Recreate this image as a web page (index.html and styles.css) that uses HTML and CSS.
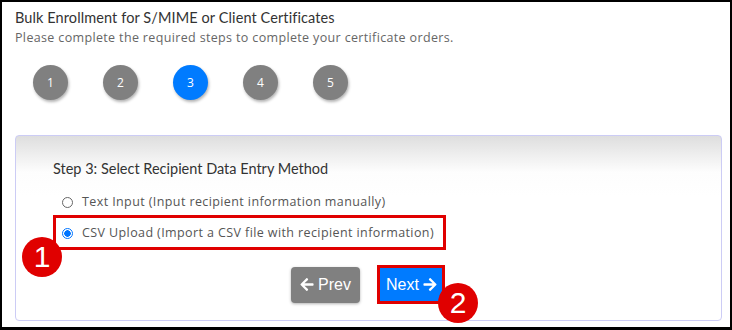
FILE: index.html
```html
<!DOCTYPE html>
<html>
<head>
<meta charset="utf-8">
<link rel="stylesheet" href="styles.css">
</head>
<body>
<div class="frame">
  <div class="header">
    <div class="title">Bulk Enrollment for S/MIME or Client Certificates</div>
    <div class="subtitle">Please complete the required steps to complete your certificate orders.</div>
  </div>
  <div class="steps">
    <div class="step">1</div>
    <div class="step">2</div>
    <div class="step active">3</div>
    <div class="step">4</div>
    <div class="step">5</div>
  </div>
  <div class="panel">
    <div class="panel-title">Step 3: Select Recipient Data Entry Method</div>
    <div class="options">
      <label class="option"><span class="radio"></span>Text Input (Input recipient information manually)</label>
      <label class="option highlight"><span class="radio checked"></span>CSV Upload (Import a CSV file with recipient information)</label>
    </div>
    <div class="actions">
      <div class="btn prev"><svg class="arrow" viewBox="0 0 448 512"><path d="M257.5 445.1l-22.2 22.2c-9.4 9.4-24.6 9.4-33.9 0L7 273c-9.4-9.4-9.4-24.6 0-33.9L201.4 44.7c9.4-9.4 24.6-9.4 33.9 0l22.2 22.2c9.5 9.5 9.3 25-.4 34.3L136.6 216H424c13.3 0 24 10.7 24 24v32c0 13.3-10.7 24-24 24H136.6l120.5 114.8c9.8 9.3 10 24.8.4 34.3z"/></svg>Prev</div>
      <div class="next-box">
        <div class="btn next">Next<svg class="arrow" viewBox="0 0 448 512"><path d="M190.5 66.9l22.2-22.2c9.4-9.4 24.6-9.4 33.9 0L441 239c9.4 9.4 9.4 24.6 0 33.9L246.6 467.3c-9.4 9.4-24.6 9.4-33.9 0l-22.2-22.2c-9.5-9.5-9.3-25 .4-34.3L311.4 296H24c-13.3 0-24-10.7-24-24v-32c0-13.3 10.7-24 24-24h287.4L190.9 101.2c-9.8-9.3-10-24.8-.4-34.3z"/></svg></div>
      </div>
    </div>
  </div>
  <div class="badge badge-1">1</div>
  <div class="badge badge-2">2</div>
</div>
</body>
</html>
```

FILE: styles.css
```css
html, body {
  margin: 0;
  padding: 0;
}
body {
  width: 732px;
  height: 330px;
  background: #000;
}
.frame {
  position: relative;
  box-sizing: border-box;
  width: 728px;
  height: 325px;
  margin: 2px 0 0 2px;
  background: #fff;
  padding: 6px 0 0 13px;
  font-family: "Open Sans", "Noto Sans", sans-serif;
  overflow: hidden;
}
.title {
  font-family: "Lato", sans-serif;
  font-size: 14.5px;
  line-height: 20px;
  color: #333;
  letter-spacing: 0.1px;
}
.subtitle {
  font-size: 12.5px;
  line-height: 18px;
  color: #666;
  margin-top: 1px;
  letter-spacing: 0.35px;
}
.steps {
  display: flex;
  gap: 35px;
  margin: 18px 0 0 18px;
}
.step {
  width: 35px;
  height: 35px;
  border-radius: 50%;
  background: #808080;
  color: #fff;
  font-size: 12px;
  display: flex;
  align-items: center;
  justify-content: center;
  box-shadow: 1px 2px 3px rgba(0,0,0,0.3);
}
.step.active {
  background: #007bff;
}
.panel {
  box-sizing: border-box;
  width: 707px;
  height: 186px;
  margin-top: 35px;
  border: 1px solid #ccccf5;
  border-radius: 4px;
  background: linear-gradient(#dedede 0px, #fdfdfd 36px, #fff 60px);
  padding: 23px 0 0 37px;
}
.panel-title {
  font-family: "Lato", sans-serif;
  font-size: 14.5px;
  line-height: 20px;
  color: #333;
}
.options {
  margin-top: 14px;
  display: flex;
  flex-direction: column;
  gap: 11px;
}
.option {
  display: flex;
  align-items: center;
  gap: 9px;
  font-size: 12.5px;
  line-height: 18px;
  color: #555;
  padding-left: 9px;
  letter-spacing: 0.4px;
}
.option.highlight {
  width: 381px;
  border: 3px solid #e00000;
  padding: 6px 0 5px 6px;
  margin-top: -7px;
  margin-left: 0;
}
.radio {
  width: 9px;
  height: 9px;
  border: 1px solid #666;
  border-radius: 50%;
  background: #fff;
  flex: none;
}
.radio.checked {
  border-color: #0075ff;
  background: radial-gradient(circle, #0075ff 0 3px, #fff 3.5px);
}
.actions {
  display: flex;
  align-items: center;
  gap: 17px;
  margin: 15px 0 0 238px;
}
.btn {
  display: flex;
  align-items: center;
  gap: 4px;
  font-family: "Liberation Sans", Arial, sans-serif;
  font-size: 16px;
  color: #fff;
  height: 36px;
  box-sizing: border-box;
}
.prev {
  background: #808080;
  border-radius: 4px;
  padding: 0 9px;
  width: 69px;
  box-shadow: 0 1px 3px rgba(0,0,0,0.3);
}
.next-box {
  border: 3px solid #e00000;
  padding: 0;
}
.next {
  background: #007bff;
  padding: 0 3px 0 6px;
  height: 33px;
  width: 62px;
}
.arrow {
  width: 14px;
  height: 15px;
  fill: #fff;
}
.badge {
  position: absolute;
  width: 40px;
  height: 40px;
  border-radius: 50%;
  background: #e00000;
  color: #fff;
  font-family: "Liberation Sans", Arial, sans-serif;
  font-size: 30px;
  display: flex;
  align-items: center;
  justify-content: center;
}
.badge-1 {
  left: 20px;
  top: 235px;
}
.badge-2 {
  left: 436px;
  top: 281px;
}
```
